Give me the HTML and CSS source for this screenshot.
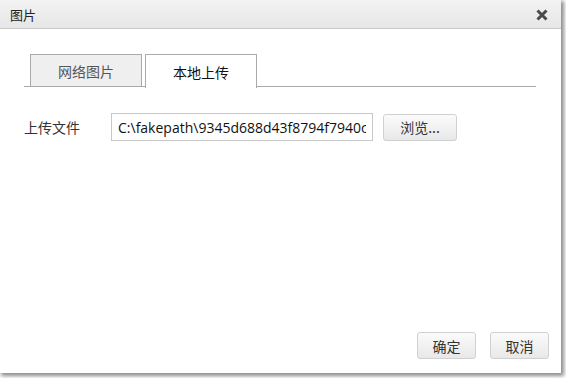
FILE: index.html
```html
<!DOCTYPE html>
<html>
<head>
	<meta charset="utf-8">
	<title>图片</title>
	<link rel="stylesheet" href="styles.css">
</head>
<body>

<div class="dialog">
	<div class="dialog-title">
		<span>图片</span>
		<svg class="dialog-close" width="12" height="12" viewBox="0 0 12 12">
			<path d="M1.5 1.5 L10.5 10.5 M10.5 1.5 L1.5 10.5" stroke="#4a4a4a" stroke-width="3" fill="none"/>
		</svg>
	</div>

	<div class="dialog-body">
		<div class="tabs">
			<div class="tab">网络图片</div>
			<div class="tab tab-active">本地上传</div>
		</div>

		<div class="upload-row">
			<label class="upload-label">上传文件</label>
			<input class="upload-path" type="text" value="C:\fakepath\9345d688d43f8794f7940c2a4ac1b2.jpg">
			<button class="btn btn-browse">浏览...</button>
		</div>
	</div>

	<div class="dialog-footer">
		<button class="btn">确定</button>
		<button class="btn">取消</button>
	</div>
</div>

</body>
</html>
```

FILE: styles.css
```css
* {
	box-sizing: border-box;
}

html, body {
	margin: 0;
	padding: 0;
	background: #fff;
}

body {
	font-family: "Noto Sans CJK SC", "Noto Sans", sans-serif;
	font-size: 13px;
	color: #333;
	width: 566px;
	height: 378px;
	overflow: hidden;
}

.dialog {
	width: 561px;
	height: 373px;
	background: #fff;
	display: flex;
	flex-direction: column;
	box-shadow: 2px 2px 4px 1px rgba(0, 0, 0, 0.45);
}

.dialog-title {
	height: 29px;
	padding: 0 13px 0 10px;
	display: flex;
	align-items: center;
	justify-content: space-between;
	background: linear-gradient(#f3f3f3, #e6e6e6);
	border-bottom: 1px solid #c9c9c9;
	color: #222;
}

.dialog-close {
	margin-top: 1px;
}

.dialog-body {
	flex: 1;
	padding: 25px 24px 0 24px;
}

.tabs {
	display: flex;
	gap: 3px;
	width: 512px;
	padding-left: 6px;
	border-bottom: 1px solid #aaa;
	height: 33px;
}

.tab {
	width: 112px;
	height: 33px;
	border: 1px solid #aaa;
	background: #efefef;
	color: #555;
	font-size: 14px;
	display: flex;
	align-items: center;
	justify-content: center;
	padding-top: 1px;
}

.tab-active {
	background: #fff;
	color: #111;
	height: 34px;
	border-bottom: none;
}

.upload-row {
	display: flex;
	align-items: center;
	margin-top: 26px;
}

.upload-label {
	width: 87px;
	font-size: 14px;
	color: #333;
}

.upload-path {
	width: 262px;
	height: 28px;
	border: 1px solid #c8c8c8;
	padding: 0 6px;
	font-family: "Open Sans", "Noto Sans", sans-serif;
	font-size: 14px;
	color: #111;
	outline: none;
}

.btn {
	height: 27px;
	padding: 0 14px;
	border: 1px solid #d0d0d0;
	border-radius: 3px;
	background: linear-gradient(#fbfbfb, #e8e8e8);
	font-family: "Noto Sans CJK SC", "Noto Sans", sans-serif;
	font-size: 14px;
	color: #333;
}

.btn-browse {
	margin-left: 10px;
	width: 74px;
	padding: 0;
}

.dialog-footer {
	display: flex;
	justify-content: flex-end;
	gap: 14px;
	padding: 0 12px 14px 0;
}

.dialog-footer .btn {
	width: 59px;
	padding: 0;
}
```
